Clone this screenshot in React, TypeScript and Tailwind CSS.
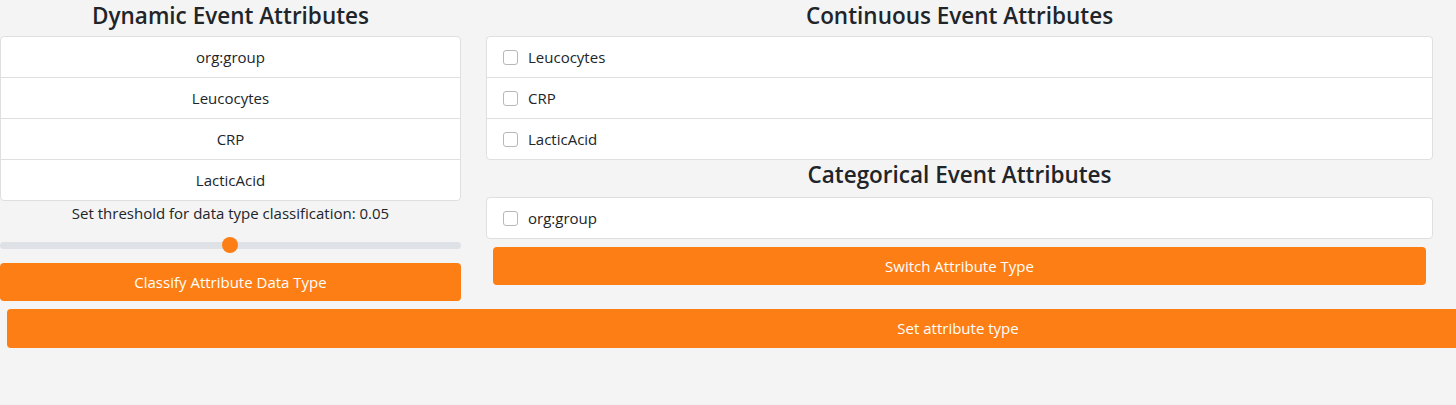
const font = { fontFamily: '"Open Sans", "Noto Sans", sans-serif' };

const dynamicAttrs = ["org:group", "Leucocytes", "CRP", "LacticAcid"];
const continuousAttrs = ["Leucocytes", "CRP", "LacticAcid"];
const categoricalAttrs = ["org:group"];

function CheckRow({ label, last }: { label: string; last?: boolean }) {
  return (
    <label
      className={
        "flex items-center px-4 text-[15px] text-[#212529] " +
        (last ? "h-[40px]" : "h-[41px] border-b border-[#dfdfdf]")
      }
    >
      <span className="w-[15px] h-[15px] rounded-[3px] border border-[#b8b8b8] bg-white mr-[10px] shrink-0" />
      {label}
    </label>
  );
}

export default function App() {
  return (
    <div className="w-[1456px] h-[405px] bg-[#f4f4f4] overflow-hidden" style={font}>
      <div className="flex">
        {/* left column */}
        <div className="w-[461px] shrink-0 flex flex-col">
          <h4 className="h-[36px] pt-[1px] text-center text-[22.5px] font-semibold text-[#212529] leading-[30px]">
            Dynamic Event Attributes
          </h4>
          <div className="bg-white border border-[#dfdfdf] rounded-[4px]">
            {dynamicAttrs.map((a, i) => (
              <div
                key={a}
                className={
                  "flex items-center justify-center text-[15px] text-[#212529] " +
                  (i < dynamicAttrs.length - 1 ? "h-[41px] border-b border-[#dfdfdf]" : "h-[40px]")
                }
              >
                {a}
              </div>
            ))}
          </div>
          <div className="text-center text-[15px] text-[#212529] h-[24px] leading-[24px]">
            Set threshold for data type classification: 0.05
          </div>
          <div className="relative h-[20px] mt-[10px] flex items-center">
            <div className="w-full h-[7px] rounded-full bg-[#dee2e6]" />
            <div className="absolute left-[222px] top-[2px] w-[16px] h-[16px] rounded-full bg-[#fd7e14]" />
          </div>
          <button className="mt-[8px] h-[38px] w-full rounded-[4px] bg-[#fd7e14] text-white text-[15px]">
            Classify Attribute Data Type
          </button>
        </div>

        {/* right column */}
        <div className="w-[947px] ml-[25px] shrink-0 flex flex-col">
          <h4 className="h-[36px] pt-[1px] text-center text-[22.5px] font-semibold text-[#212529] leading-[30px]">
            Continuous Event Attributes
          </h4>
          <div className="bg-white border border-[#dfdfdf] rounded-[4px]">
            {continuousAttrs.map((a, i) => (
              <CheckRow key={a} label={a} last={i === continuousAttrs.length - 1} />
            ))}
          </div>
          <h4 className="h-[37px] text-center text-[22.5px] font-semibold text-[#212529] leading-[30px]">
            Categorical Event Attributes
          </h4>
          <div className="bg-white border border-[#dfdfdf] rounded-[4px]">
            {categoricalAttrs.map((a, i) => (
              <CheckRow key={a} label={a} last={i === categoricalAttrs.length - 1} />
            ))}
          </div>
          <button className="mt-[8px] mx-[7px] h-[38px] rounded-[4px] bg-[#fd7e14] text-white text-[15px]">
            Switch Attribute Type
          </button>
        </div>
      </div>
      <button className="mt-[8px] ml-[7px] w-[1902px] h-[39px] rounded-[4px] bg-[#fd7e14] text-white text-[15px]">
        Set attribute type
      </button>
    </div>
  );
}
